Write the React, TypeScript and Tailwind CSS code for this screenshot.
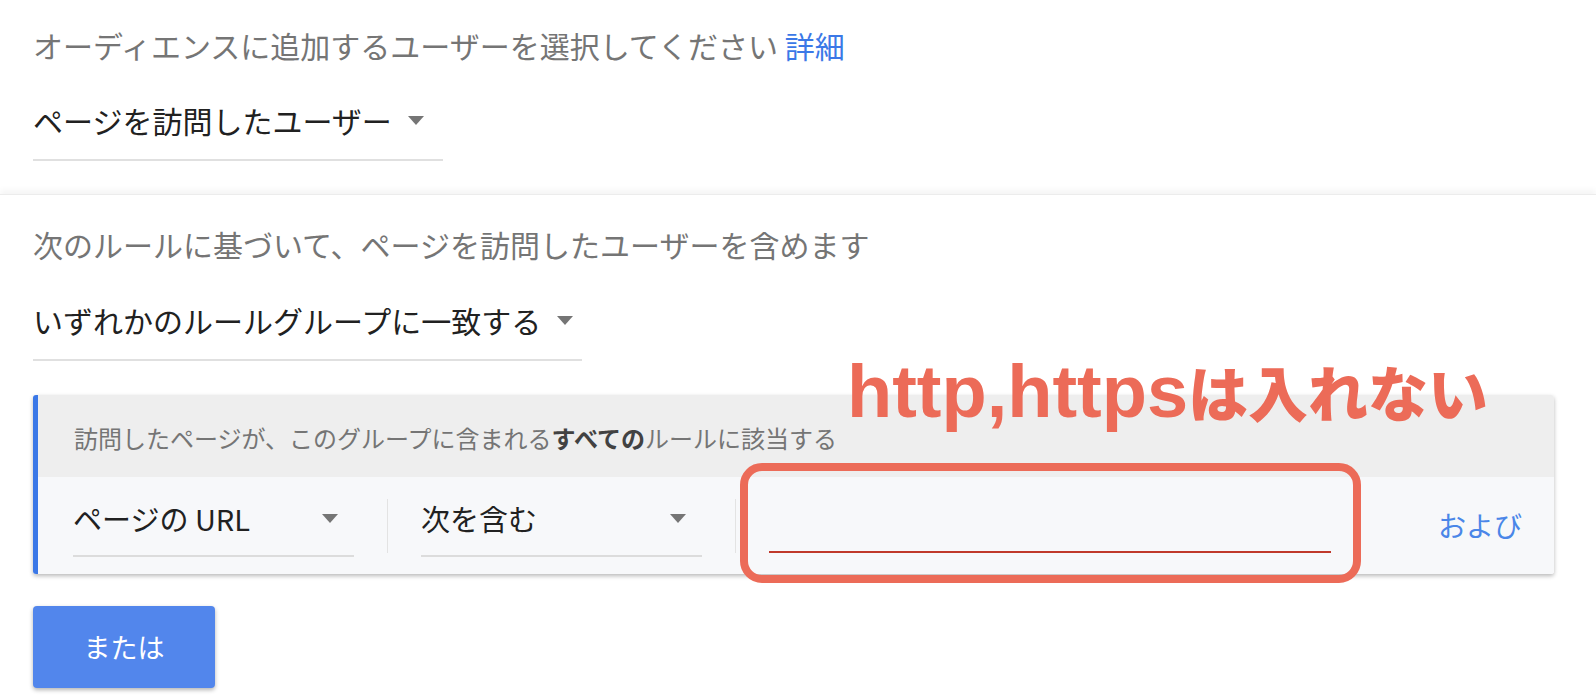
const Caret = () => (
  <svg width="16" height="9" viewBox="0 0 16 9" className="shrink-0">
    <path d="M0 0 L16 0 L8 9 Z" fill="#757575" />
  </svg>
)

const Select = ({ label, width }: { label: string; width: string }) => (
  <div
    className={`flex items-center gap-[16px] pb-[21px] border-b-2 border-[#e0e0e0] ${width}`}
  >
    <span className="text-[30px] leading-[36px] text-[#212121]">{label}</span>
    <Caret />
  </div>
)

const RowSelect = ({ label }: { label: string }) => (
  <div className="mt-[23px] w-[281px] shrink-0 flex items-center justify-between pb-[19px] border-b-2 border-[#dcdcdc]">
    <span className="text-[29px] leading-[36px] text-[#212121]">{label}</span>
    <span className="mr-[16px]">
      <Caret />
    </span>
  </div>
)

const Divider = () => (
  <div className="mt-[22px] mx-[33px] h-[54px] w-px shrink-0 bg-[#e3e3e3]" />
)

export default function App() {
  return (
    <div
      className="relative w-full h-[698px] overflow-hidden bg-white"
      style={{ fontFamily: '"Noto Sans CJK JP", "Noto Sans", sans-serif' }}
    >
      {/* audience section */}
      <div className="px-[33px] pt-[27px] pb-[33px]">
        <p className="text-[30px] leading-[36px] text-[#757575]">
          オーディエンスに追加するユーザーを選択してください{" "}
          <a className="text-[#3b78e7]">詳細</a>
        </p>
        <div className="mt-[39px]">
          <Select label="ページを訪問したユーザー" width="w-[410px]" />
        </div>
      </div>

      {/* rules section */}
      <div className="border-t border-[#ececec] shadow-[0_-4px_6px_rgba(0,0,0,0.045)] px-[33px] pt-[31px]">
        <p className="text-[30px] leading-[36px] text-[#757575]">
          次のルールに基づいて、ページを訪問したユーザーを含めます
        </p>
        <div className="mt-[40px]">
          <Select label="いずれかのルールグループに一致する" width="w-[549px]" />
        </div>

        <div className="mt-[34px] w-[1521px] flex rounded-[3px] overflow-hidden shadow-[0_2px_4px_rgba(0,0,0,0.28)]">
          <div className="w-[5px] shrink-0 bg-[#3b78e7]" />
          <div className="flex-1 flex flex-col">
            <div className="h-[82px] bg-[#eeeeee] flex items-center pl-[36px] pt-[4px] text-[24px] text-[#757575]">
              訪問したページが、このグループに含まれる
              <b className="font-bold text-[#424242]">すべての</b>
              ルールに該当する
            </div>
            <div className="h-[97px] bg-[#f7f8fa] flex items-start pl-[35px] pr-[32px]">
              <RowSelect label="ページの URL" />
              <Divider />
              <RowSelect label="次を含む" />
              <Divider />
              <div className="mt-[74px] w-[562px] shrink-0 h-[2px] bg-[#c0392b]" />
              <span className="ml-auto mt-[31px] text-[28px] leading-[34px] text-[#4a86e8]">
                および
              </span>
            </div>
          </div>
        </div>

        <button className="mt-[32px] w-[182px] h-[82px] rounded-[4px] bg-[#5286ec] text-white text-[27px] shadow-[0_2px_4px_rgba(0,0,0,0.3)]">
          または
        </button>
      </div>

      {/* annotation overlay */}
      <div className="absolute left-[740px] top-[463px] w-[621px] h-[120px] rounded-[22px] border-[8px] border-[#ec6b58]" />
      <div className="absolute left-[847px] top-[355px] leading-none whitespace-nowrap text-[#ec6b58]">
        <span className="text-[74px] font-bold" style={{ fontFamily: '"Liberation Sans", Arial, sans-serif' }}>
          http,https
        </span>
        <span className="text-[60px] font-black" style={{ fontFamily: '"Noto Sans CJK JP", sans-serif' }}>
          は入れない
        </span>
      </div>
    </div>
  )
}
